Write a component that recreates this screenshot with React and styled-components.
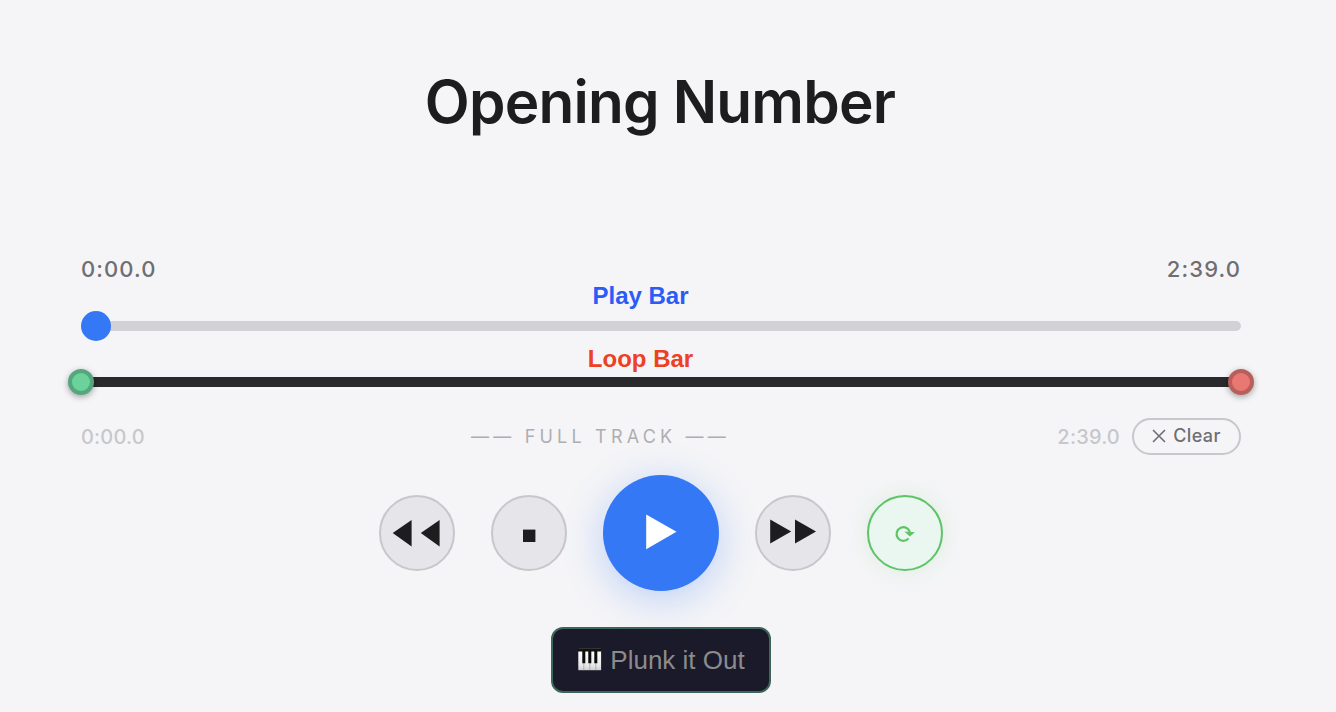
import React from 'react';
import styled, { createGlobalStyle } from 'styled-components';

const Global = createGlobalStyle`
  *, *::before, *::after { box-sizing: border-box; }
  body { margin: 0; background: #f5f5f7; overflow: hidden; }
  button { margin: 0; padding: 0; }
`;

const sans = '"Inter", "Liberation Sans", sans-serif';
const arial = '"Liberation Sans", Arial, sans-serif';

const Page = styled.main`
  display: flex;
  flex-direction: column;
  width: 1322px;
  height: 712px;
  padding: 60px 81px 0;
  font-family: ${sans};
  background: #f5f5f7;
`;

const Title = styled.h1`
  margin: 0 0 110px;
  padding-right: 2px;
  height: 84px;
  line-height: 84px;
  font-size: 58.5px;
  font-weight: 640;
  letter-spacing: -0.8px;
  text-align: center;
  white-space: nowrap;
  color: #1d1d1f;
`;

const Times = styled.div`
  display: flex;
  justify-content: space-between;
  height: 28px;
  line-height: 30px;
`;

const Time = styled.span`
  font-size: ${(p) => (p.$muted ? '20px' : '22px')};
  font-weight: 450;
  letter-spacing: ${(p) => (p.$muted ? '0.2px' : '1.1px')};
  color: ${(p) => (p.$muted ? '#c7c7cc' : '#6e6e73')};
`;

const Label = styled.div`
  height: ${(p) => p.$height};
  line-height: 28px;
  padding-right: 41px;
  margin-top: ${(p) => p.$top || 0};
  font-family: ${arial};
  font-size: 24px;
  font-weight: 700;
  text-align: center;
  color: ${(p) => p.$color};
`;

const Slider = styled.div`
  position: relative;
  display: flex;
  align-items: center;
  height: ${(p) => p.$height};
`;

const Track = styled.div`
  width: 100%;
  height: 10px;
  border-radius: 5px;
  background: ${(p) => p.$color};
`;

const PlayKnob = styled.div`
  position: absolute;
  left: 0;
  top: 0;
  width: 30px;
  height: 30px;
  border-radius: 50%;
  background: #3478f6;
`;

const LoopKnob = styled.div`
  position: absolute;
  top: 0;
  ${(p) => p.$side}: -13px;
  width: 26px;
  height: 26px;
  border-radius: 50%;
  border: 4px solid ${(p) => p.$edge};
  background: ${(p) => p.$fill};
  box-shadow: 0 2px 6px rgba(0, 0, 0, 0.35);
`;

const Info = styled.div`
  display: grid;
  grid-template-columns: 1fr auto 1fr;
  align-items: center;
  height: 37px;
  margin: 23px 0 20px;
`;

const Status = styled.span`
  padding-right: 121px;
  font-size: 18px;
  letter-spacing: 4.2px;
  color: #aeaeb2;
  white-space: nowrap;
`;

const InfoEnd = styled.div`
  display: flex;
  align-items: center;
  justify-content: flex-end;
  gap: 12px;
`;

const Clear = styled.button`
  display: flex;
  align-items: center;
  justify-content: center;
  gap: 7px;
  width: 109px;
  height: 37px;
  padding-bottom: 2px;
  border: 2px solid #c7c7cc;
  border-radius: 19px;
  background: transparent;
  color: #6e6e73;
  font: 500 18px ${sans};
  letter-spacing: 0.4px;
`;

const Controls = styled.div`
  display: flex;
  align-items: center;
  justify-content: center;
  gap: 36px;
  height: 116px;
`;

const Round = styled.button`
  display: flex;
  align-items: center;
  justify-content: center;
  flex: none;
  width: 76px;
  height: 76px;
  border-radius: 50%;
  border: 2px solid ${(p) => (p.$active ? '#5fc466' : '#c7c7cc')};
  background: ${(p) => (p.$active ? '#eaf7f0' : '#e5e5ea')};
  box-shadow: ${(p) => (p.$active ? '0 0 24px rgba(95, 196, 102, 0.15)' : 'none')};
`;

const PlayButton = styled(Round)`
  width: 116px;
  height: 116px;
  border: 0;
  background: #3478f6;
  box-shadow: 0 8px 40px rgba(52, 120, 246, 0.3);
`;

const Glyph = styled.svg`
  display: block;
  flex: none;
`;

const Plunk = styled.button`
  display: flex;
  align-items: center;
  align-self: center;
  justify-content: center;
  gap: 8px;
  flex: none;
  width: 220px;
  height: 66px;
  margin-top: 36px;
  border: 2px solid #3d6658;
  border-radius: 12px;
  background: #1a1a2b;
  color: #8b8b8b;
  font: 26px ${arial};
  white-space: nowrap;
`;

const Piano = () => (
  <Glyph width="25" height="24" viewBox="-1 1 25 24">
    <defs>
      <linearGradient id="keys" x1="0" y1="0" x2="0" y2="1">
        <stop offset="0" stopColor="#fff" />
        <stop offset="0.75" stopColor="#e9e9e9" />
        <stop offset="1" stopColor="#cfcfcf" />
      </linearGradient>
    </defs>
    <rect x="0.3" y="3" width="22.8" height="20.2" fill="url(#keys)" />
    <rect x="0" y="1" width="23.3" height="3.5" fill="#111" />
    <rect x="0.5" y="1" width="22.5" height="1" fill="#333" />
    <path d="M5.8 16V23.2M11.8 16V23.2M17.8 16V23.2" stroke="#a5a5a5" strokeWidth="0.8" />
    <path d="M5.8 4V16.2M11.8 4V16.2M17.8 4V16.2" stroke="#0b0b0b" strokeWidth="3" />
  </Glyph>
);

export default function App() {
  return (
    <>
      <Global />
      <Page>
        <Title>Opening Number</Title>
        <Times>
          <Time>0:00.0</Time>
          <Time>2:39.0</Time>
        </Times>
        <Label $color="#2b5cf6" $height="29px">Play Bar</Label>
        <Slider $height="30px">
          <Track $color="#d1d1d6" />
          <PlayKnob />
        </Slider>
        <Label $color="#ee4023" $top="4px" $height="24px">Loop Bar</Label>
        <Slider $height="26px">
          <Track $color="#2a2a2c" />
          <LoopKnob $side="left" $edge="#55a67d" $fill="#6bd29c" />
          <LoopKnob $side="right" $edge="#b95f5b" $fill="#e97872" />
        </Slider>
        <Info>
          <Time $muted>0:00.0</Time>
          <Status>—— FULL TRACK ——</Status>
          <InfoEnd>
            <Time $muted>2:39.0</Time>
            <Clear>
              <Glyph width="14" height="14" viewBox="0 0 14 14">
                <path d="M1 1L13 13M13 1L1 13" stroke="currentColor" strokeWidth="1.6" />
              </Glyph>
              Clear
            </Clear>
          </InfoEnd>
        </Info>
        <Controls>
          <Round aria-label="Rewind">
            <Glyph width="72" height="72" viewBox="0 0 72 72" fill="#1d1d1f">
              <path d="M11.7 36.1L30.6 23V49.6ZM39.8 36.1L58.6 23V49.6Z" />
            </Glyph>
          </Round>
          <Round aria-label="Stop">
            <Glyph width="72" height="72" viewBox="0 0 72 72" fill="#1d1d1f">
              <rect x="30" y="32.6" width="12.4" height="12.4" />
            </Glyph>
          </Round>
          <PlayButton aria-label="Play">
            <Glyph width="116" height="116" viewBox="0 0 116 116" fill="#fff">
              <path d="M43.2 39.5L73.5 56.8L43.2 74.2Z" />
            </Glyph>
          </PlayButton>
          <Round aria-label="Fast forward">
            <Glyph width="72" height="72" viewBox="0 0 72 72" fill="#1d1d1f">
              <path d="M13.2 22.6L34.2 34.6L13.2 46.6ZM38 22.6L59 34.6L38 46.6Z" />
            </Glyph>
          </Round>
          <Round $active aria-label="Loop">
            <Glyph width="72" height="72" viewBox="0 0 72 72" fill="none">
              <path d="M39.6 41.4A6.8 6.8 0 1 1 41.1 35.8" stroke="#5fc466" strokeWidth="2.2" />
              <path d="M35.4 34.6L46 35.3L40.8 39.4Z" fill="#5fc466" />
            </Glyph>
          </Round>
        </Controls>
        <Plunk>
          <Piano />
          Plunk it Out
        </Plunk>
      </Page>
    </>
  );
}
